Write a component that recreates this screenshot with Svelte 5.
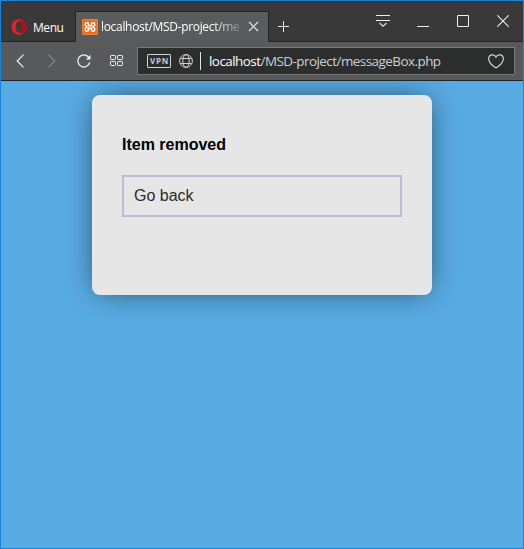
<script>
  const host = 'localhost';
  const path = '/MSD-project/messageBox.php';
</script>

<div class="window">
  <header class="tabs">
    <div class="menu">
      <svg width="16" height="16" viewBox="0 0 16 16"><path fill="#f01c30" fill-rule="evenodd" d="M8 .2a7.6 7.8 0 1 0 0 15.6A7.6 7.8 0 1 0 8 .2M8 2.200c2 0 3.300 2.700 3.300 5.800S10 13.800 8 13.800 4.700 11.100 4.700 8 6 2.200 8 2.200"/><path fill="#a90f20" d="M8 2.200C9.500.8 12.200 1.300 13.700 3.200c2.400 3 2.400 6.800 0 9.600-1.500 1.900-4.200 2.400-5.700 1 2 0 3.300-2.700 3.300-5.800S10 2.200 8 2.200"/></svg>
      <span>Menu</span>
    </div>
    <div class="tab">
      <svg class="fav" width="16" height="16" viewBox="0 0 16 16"><rect width="16" height="16" rx="1.500" fill="#f08a45"/><rect x=".8" y=".8" width="14.400" height="14.400" rx="1.500" fill="#ec6c1c"/><path d="M6.600 6.400V5.200Q6.400 3.700 4.900 3.700T3.200 5.300Q3.200 7 4.700 8Q3.200 9 3.200 10.700Q3.400 12.300 4.900 12.300T6.600 10.800V9.600M9.400 6.400V5.200Q9.600 3.700 11.100 3.700T12.800 5.300Q12.800 7 11.300 8Q12.800 9 12.800 10.700Q12.600 12.300 11.100 12.300T9.400 10.800V9.600M5.500 6.700H10.500M5.500 9.300H10.500" fill="none" stroke="#fff" stroke-width="1.500"/></svg>
      <span class="title">localhost/MSD-project/me</span>
      <svg class="close" width="11" height="11" viewBox="0 0 11 11"><path d="M1 1l9 9M10 1l-9 9" stroke="#e5e5e5" stroke-width="1.2"/></svg>
    </div>
    <svg class="plus" width="11" height="11" viewBox="0 0 11 11"><path d="M0 5.5h11M5.5 0v11" stroke="#e5e5e5"/></svg>
    <div class="controls">
      <svg width="14" height="12" viewBox="0 0 14 12"><path d="M0 .5h14M0 5.5h14" stroke="#eee"/><path d="M3.500 8L7 11.200 10.500 8" fill="none" stroke="#ddd" stroke-width="1.200"/></svg>
      <svg width="12" height="12" viewBox="0 0 12 12"><path d="M0 11.500h12" stroke="#eee"/></svg>
      <svg width="12" height="12" viewBox="0 0 12 12"><path d="M.5.5h11v11H.5z" fill="none" stroke="#eee"/></svg>
      <svg width="12" height="12" viewBox="0 0 12 12"><path d="M.3.3l11.400 11.400M11.700.3L.3 11.700" stroke="#eee" stroke-width="1.1"/></svg>
    </div>
  </header>

  <nav class="toolbar">
    <svg class="back" width="8" height="14" viewBox="0 0 8 14"><path d="M7.500.6L1.200 7l6.300 6.400" fill="none" stroke="#f0f0f0" stroke-width="1.2"/></svg>
    <svg class="forward" width="8" height="14" viewBox="0 0 8 14"><path d="M.5.6L6.800 7 .5 13.400" fill="none" stroke="#858687" stroke-width="1.200"/></svg>
    <svg class="reload" width="14" height="14" viewBox="0 0 14 14"><path d="M12.700 8.500A6 6 0 1 1 12 3.800" fill="none" stroke="#eee" stroke-width="1.300"/><path d="M13.500.8v4.700H8.800z" fill="#eee"/></svg>
    <svg class="grid" width="14" height="12" viewBox="0 0 14 12"><g fill="none" stroke="#eee" stroke-width="1"><rect x=".5" y=".5" width="5" height="4" rx=".7"/><rect x="7.500" y=".5" width="5" height="4" rx=".7"/><rect x=".5" y="6.500" width="5" height="4" rx=".7"/><rect x="7.500" y="6.500" width="5" height="4" rx=".7"/></g></svg>
    <div class="address">
      <span class="vpn">VPN</span>
      <svg class="globe" width="14" height="14" viewBox="0 0 14 14"><g fill="none" stroke="#d0d2d2"><circle cx="7" cy="7" r="6.400"/><ellipse cx="7" cy="7" rx="3.200" ry="6.400"/><path d="M1.400 4.500h11.200M1.400 9.500h11.200"/></g></svg>
      <i class="sep"></i>
      <span class="url"><b>{host}</b>{path}</span>
      <svg class="heart" width="16" height="15" viewBox="0 0 16 15"><path d="M8 3.100C6.400-.3.7.2.7 4.900.7 8.500 5 12 8 13.900c3-1.900 7.300-5.400 7.300-9C15.300.2 9.600-.3 8 3.100z" fill="none" stroke="#d3d5d5" stroke-width="1.200"/></svg>
    </div>
  </nav>

  <main>
    <section class="box">
      <h1>Item removed</h1>
      <a class="button" href="#back">Go back</a>
    </section>
  </main>
</div>

<style>
  .window {
    box-sizing: border-box;
    width: 524px;
    height: 549px;
    border: 1px solid #1a83d8;
    display: flex;
    flex-direction: column;
    overflow: hidden;
    font-family: "Open Sans", "Noto Sans", sans-serif;
    color: #fff;
  }
  svg { display: block; flex: none; }
  .tabs {
    box-sizing: border-box;
    height: 41px;
    flex: none;
    display: flex;
    background: #393939;
    border-bottom: 1px solid #252525;
  }
  .menu {
    box-sizing: border-box;
    width: 74px;
    padding: 18px 0 0 10px;
    display: flex;
    gap: 6px;
    font-size: 12px;
    letter-spacing: -0.45px;
    line-height: 17px;
  }
  .tab {
    box-sizing: border-box;
    width: 194px;
    height: 31px;
    margin: 10px 0 -1px;
    padding: 7px 0 0 7px;
    display: flex;
    background: #5a5b5d;
    border: solid #252525;
    border-width: 1px 1px 0;
  }
  .fav { margin-left: -1px; }
  .title {
    width: 142px;
    margin: -1px -1px 0 3px;
    white-space: nowrap;
    font-size: 12px;
    line-height: 18px;
    letter-spacing: -0.32px;
    -webkit-mask-image: linear-gradient(90deg, #000 112px, transparent 146px);
    mask-image: linear-gradient(90deg, #000 112px, transparent 146px);
  }
  .close { margin: 2px 0 0 6px; }
  .plus { margin: 20px 0 0 9px; }
  .controls {
    display: flex;
    margin: 14px 0 0 87px;
    gap: 28px;
  }
  .controls svg:first-child { margin-right: -1px; }
  .toolbar {
    box-sizing: border-box;
    height: 39px;
    flex: none;
    display: flex;
    align-items: center;
    background: #58595b;
    border-bottom: 1px solid #252525;
  }
  .back { margin-left: 15px; }
  .forward { margin-left: 24px; }
  .reload { margin-left: 21px; }
  .grid { margin-left: 19px; }
  .address {
    box-sizing: border-box;
    width: 378px;
    height: 28px;
    flex: none;
    margin-left: 13px;
    display: flex;
    align-items: center;
    background: #2c2e2e;
    border: 1px solid #777979;
  }
  .vpn {
    box-sizing: border-box;
    width: 24px;
    height: 14px;
    margin-left: 9px;
    border: 1px solid #d0d2d2;
    border-radius: 1px;
    font: 700 8px/12px "Open Sans", sans-serif;
    letter-spacing: 0.8px;
    padding-left: 2px;
    color: #c8caca;
  }
  .globe { margin-left: 8px; }
  .sep { width: 1px; height: 18px; margin-left: 7px; background: #e4e4e4; }
  .url {
    width: 271px;
    margin-left: 8px;
    font-size: 13.4px;
    line-height: 20px;
    letter-spacing: -0.51px;
    color: #cfd1d1;
  }
  .url b { font-weight: 400; color: #fff; }
  .heart { margin-left: 8px; }
  main { flex: 1; background: #58aae2; overflow: hidden; }
  .box {
    box-sizing: border-box;
    width: 340px;
    height: 200px;
    margin: 14px 0 0 91px;
    padding: 41px 30px 0;
    border-radius: 8px;
    background: #e6e6e6;
    box-shadow: 0 0 30px -6px rgba(0, 0, 0, 0.65);
    font-family: "Liberation Sans", Arial, sans-serif;
    color: #000;
  }
  h1 { margin: 0; font-size: 16px; line-height: 18px; }
  .button {
    box-sizing: border-box;
    display: block;
    height: 42px;
    margin-top: 21px;
    padding: 0 10px;
    border: 2px solid #bcbcd4;
    font-size: 16px;
    line-height: 38px;
    color: #2b2b2b;
    text-decoration: none;
  }
</style>
